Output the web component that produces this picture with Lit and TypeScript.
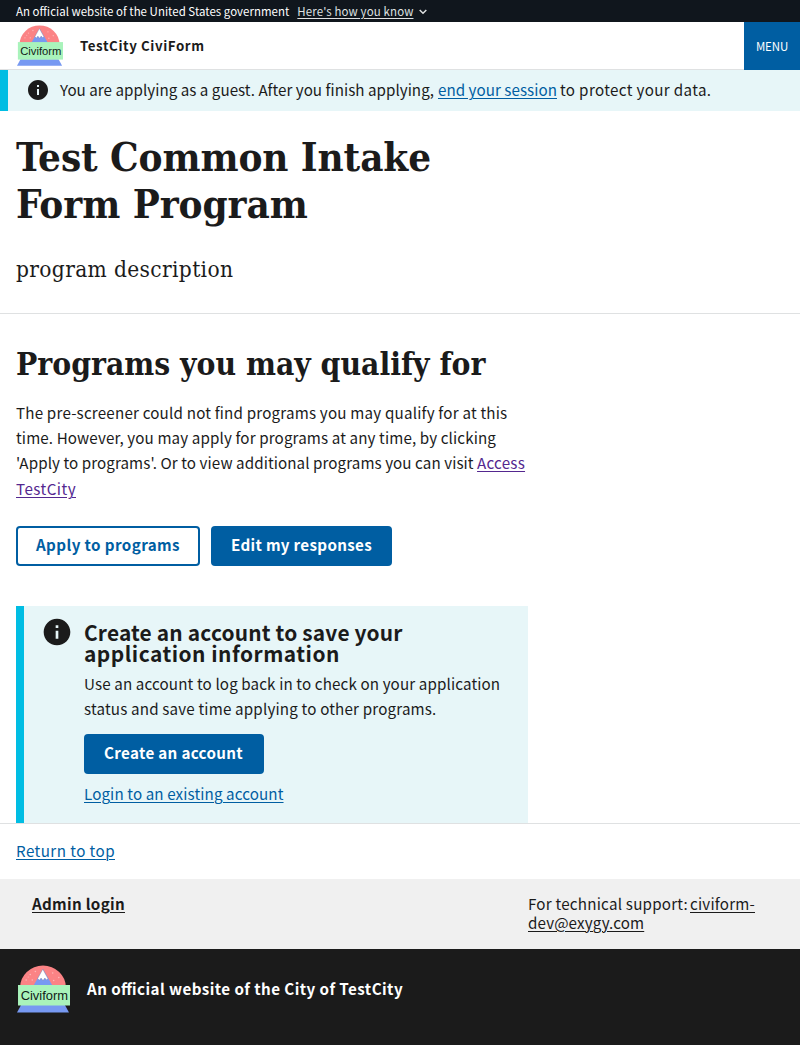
import { LitElement, html, css, svg } from "lit";
import { customElement } from "lit/decorators.js";

const run = (text: string, tracking: number, cls = "") =>
  html`<span class="run ${cls}" style="letter-spacing:${tracking}px">${text}</span>`;

const infoPath = svg`<path d="M12 2C6.48 2 2 6.48 2 12s4.480 10 10 10 10-4.480 10-10S17.520 2 12 2zm1 15h-2v-6h2v6zm0-8h-2V7h2v2z" />`;

@customElement("civiform-logo")
class CiviformLogo extends LitElement {
  static styles = css`
    :host { display: block; }
    svg { display: block; width: 100%; height: 100%; overflow: visible; }
    .word { font-family: "Liberation Sans", sans-serif; font-size: 12.8px; font-weight: 400; fill: #111b18; }
  `;
  render() {
    return html`<svg viewBox="0 0 52 48" preserveAspectRatio="none" aria-label="Civiform">
      <path d="M3 22.500A22.500 22 0 0 1 48 22.500z" fill="#fb8385" />
      <g fill="#fdb6b6">
        <circle cx="13" cy="9.500" r=".8" /><circle cx="18" cy="6.500" r=".8" /><circle cx="9" cy="15" r=".8" />
        <circle cx="15" cy="15" r=".8" /><circle cx="35" cy="8" r=".8" /><circle cx="41" cy="12.500" r=".8" />
        <circle cx="36" cy="15.500" r=".8" /><circle cx="11" cy="12" r=".6" />
      </g>
      <path d="M16 21L25.500 4 35 21z" fill="#7799f2" />
      <path d="M20.300 13.500L25.300 4.200l5 9.300-1.200 1.500-1.800-2-1.800 2.600-1.900-2.600-1.600 2.300z" fill="#fff" stroke="#77708c" stroke-width=".35" />
      <path d="M4 40H47L51 47.600H0z" fill="#7799f2" />
      <rect x="1" y="20" width="51" height="20.500" fill="#a9f3bb" />
      <text class="word" x="3.600" y="35.300" textLength="46.500" lengthAdjust="spacingAndGlyphs">Civiform</text>
    </svg>`;
  }
}

@customElement("app-root")
class AppRoot extends LitElement {
  static styles = css`
    :host {
      display: block;
      font-family: "Noto Sans CJK SC", "Noto Sans", sans-serif;
      font-size: 15.18px;
      color: #1b1b1b;
      background: #fff;
    }
    * { box-sizing: border-box; }
    h1, h2, h3, p { margin: 0; }
    a { color: #005ea2; text-decoration: underline; text-decoration-thickness: 1px; text-underline-offset: 2px; text-decoration-skip-ink: auto; }
    .run { white-space: nowrap; font-feature-settings: "liga" 1; }
    .line { display: block; }

    .banner { display: flex; align-items: center; height: 22px; padding: 0 16px; background: #10161d; color: #fff; font-size: 11.46px; line-height: 22px; }
    .banner a { color: #dfe1e2; margin-left: 8px; }
    .banner svg { width: 8px; height: 6px; margin: 1px 0 0 6px; }

    .header { display: flex; height: 48px; padding-left: 16px; border-bottom: 1px solid #dfe1e2; }
    .header civiform-logo { width: 46px; height: 41px; margin: 3px 17px 0 1px; }
    .site { flex: 1; font-size: 13.32px; font-weight: 700; line-height: 47px; }
    .menu { width: 56px; height: 48px; border: 0; padding: 0; background: #005ea2; color: #fff; font: 400 11.46px/48px "Noto Sans CJK SC", sans-serif; text-align: center; }

    .guest { display: flex; height: 41px; padding-left: 18px; background: #e7f6f8; border-left: 8px solid #00bde3; line-height: 38px; }
    .guest svg { width: 24px; height: 24px; margin: 8px 10px 0 0; fill: #1b1b1b; }
    .guest a { margin: 0 3px 0 4px; }

    .intro { height: 203px; padding: 22px 16px 0; border-bottom: 1px solid #dfe1e2; font-family: "DejaVu Serif Condensed", "DejaVu Serif", serif; }
    h1 { font-size: 40px; line-height: 47px; }
    .desc { margin-top: 25px; font-size: 22.5px; line-height: 34px; }

    .body { padding: 30px 16px 0; }
    h2 { font-family: "DejaVu Serif Condensed", "DejaVu Serif", serif; font-size: 31.5px; line-height: 40px; }
    .copy { margin-top: 15.6px; line-height: 25.4px; }
    .copy a { color: #54278f; }
    .actions { display: flex; gap: 11px; margin-top: 24.4px; }
    .btn { display: block; height: 40px; padding: 0 0 4px; border: 0; border-radius: 4px; background: #005ea2; color: #fff; font: 700 15.18px/36px "Noto Sans CJK SC", sans-serif; text-align: center; }
    .outline { width: 184px; background: transparent; color: #005ea2; box-shadow: inset 0 0 0 2px #005ea2; }
    .edit { width: 181px; }
    .create { width: 180px; margin-top: 12.2px; padding-right: 1px; }

    .account { display: flex; width: 512px; height: 217px; margin-top: 40px; padding-left: 16px; background: #e7f6f8; border-left: 8px solid #00bde3; }
    .account svg { flex: none; width: 32px; height: 32px; margin: 10px 11px 0 1px; fill: #1b1b1b; }
    .account-text { padding-top: 16.5px; }
    h3 { font-size: 20.9px; line-height: 21px; }
    .account-copy { margin-top: 6.5px; line-height: 25.4px; }
    .login { margin-top: 7px; line-height: 25px; }

    .top { height: 56px; padding-left: 16px; border-top: 1px solid #dfe1e2; line-height: 52px; }
    .links { display: flex; height: 70px; padding: 15px 16px 0 32px; background: #f0f0f0; line-height: 19px; }
    .links a { color: #1b1b1b; }
    .admin { width: 496px; font-weight: 700; }
    .support-line { display: flex; gap: 2px; }
    .foot { display: flex; height: 96px; padding: 16px 17px 0; background: #1b1b1b; color: #fff; font-weight: 700; line-height: 47px; }
    .foot civiform-logo { width: 53px; height: 48px; margin-right: 17px; }
  `;

  render() {
    return html`
      <div class="banner">
        ${run("An official website of the United States government", 0.033)}
        <a>${run("Here's how you know", 0.136)}</a>
        <svg viewBox="0 0 8 6"><path d="M.7 1L4 4.300 7.300 1" fill="none" stroke="#dfe1e2" stroke-width="1.500" /></svg>
      </div>
      <header class="header">
        <civiform-logo></civiform-logo>
        <div class="site">${run("TestCity CiviForm", 0.57)}</div>
        <button class="menu">${run("MENU", -0.1)}</button>
      </header>
      <div class="guest">
        <svg viewBox="0 0 24 24">${infoPath}</svg>
        ${run("You are applying as a guest. After you finish applying,", 0.03)}
        <a>${run("end your session", 0.042)}</a>
        ${run("to protect your data.", 0.35)}
      </div>
      <section class="intro">
        <h1>
          <span class="line">${run("Test Common Intake", -0.1)}</span>
          <span class="line">${run("Form Program", -0.06)}</span>
        </h1>
        <p class="desc">${run("program description", 0.35)}</p>
      </section>
      <main class="body">
        <h2>${run("Programs you may qualify for", 0)}</h2>
        <p class="copy">
          <span class="line">${run("The pre-screener could not find programs you may qualify for at this", 0.193)}</span>
          <span class="line">${run("time. However, you may apply for programs at any time, by clicking", 0.119)}</span>
          <span class="line">${run("'Apply to programs'. Or to view additional programs you can visit", 0.075)} <a>${run("Access", 0.237)}</a></span>
          <span class="line"><a>${run("TestCity", 0.457)}</a></span>
        </p>
        <div class="actions">
          <button class="btn outline">${run("Apply to programs", 0.397)}</button>
          <button class="btn edit">${run("Edit my responses", 0.31)}</button>
        </div>
        <section class="account">
          <svg viewBox="0 0 24 24">${infoPath}</svg>
          <div class="account-text">
            <h3>
              <span class="line">${run("Create an account to save your", 0.17)}</span>
              <span class="line">${run("application information", 0.5)}</span>
            </h3>
            <p class="account-copy">
              <span class="line">${run("Use an account to log back in to check on your application", 0.125)}</span>
              <span class="line">${run("status and save time applying to other programs.", 0.17)}</span>
            </p>
            <button class="btn create">${run("Create an account", 0.324)}</button>
            <div class="login"><a>${run("Login to an existing account", 0.11)}</a></div>
          </div>
        </section>
      </main>
      <div class="top"><a>${run("Return to top", 0.434)}</a></div>
      <nav class="links">
        <div class="admin"><a>${run("Admin login", 0.311)}</a></div>
        <div>
          <div class="support-line">${run("For technical support:", 0.222)}<a>${run("civiform-", 0.205)}</a></div>
          <a>${run("dev@exygy.com", 0.12)}</a>
        </div>
      </nav>
      <footer class="foot">
        <civiform-logo></civiform-logo>
        ${run("An official website of the City of TestCity", 0.43)}
      </footer>
    `;
  }
}
